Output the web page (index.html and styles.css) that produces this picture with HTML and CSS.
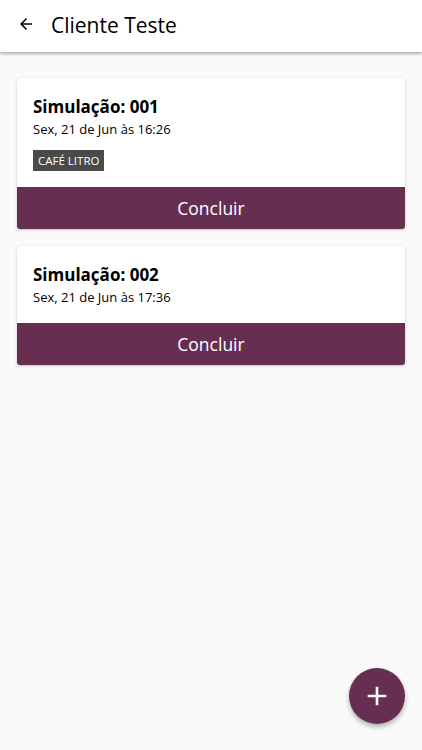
FILE: index.html
```html
<!DOCTYPE html>
<html lang="pt">
	<head>
		<meta charset="UTF-8">
		<title>Cliente Teste</title>
		<meta name="viewport" content="width=device-width, initial-scale=1.0">
		<link rel="stylesheet" href="styles.css">
	</head>
	<body>
		<header class="toolbar">
			<button class="back" aria-label="Voltar">
				<svg width="18" height="18" viewBox="0 0 24 24"><path d="M20 11H7.83l5.59-5.59L12 4l-8 8 8 8 1.41-1.41L7.83 13H20v-2z" fill="#000"/></svg>
			</button>
			<h1>Cliente Teste</h1>
		</header>
		<main class="list">
			<article class="card">
				<div class="card-body">
					<h2>Simulação: 001</h2>
					<p class="date">Sex, 21 de Jun às 16:26</p>
					<div class="tags"><span class="tag">CAFÉ LITRO</span></div>
				</div>
				<button class="done">Concluir</button>
			</article>
			<article class="card">
				<div class="card-body">
					<h2>Simulação: 002</h2>
					<p class="date">Sex, 21 de Jun às 17:36</p>
				</div>
				<button class="done">Concluir</button>
			</article>
		</main>
		<button class="fab" aria-label="Adicionar">
			<svg width="32" height="32" viewBox="0 0 24 24"><path d="M19 13h-6v6h-2v-6H5v-2h6V5h2v6h6v2z" fill="#fff"/></svg>
		</button>
	</body>
</html>
```

FILE: styles.css
```css
html, body {
	margin: 0;
	padding: 0;
	height: 100%;
	background: #fafafa;
	font-family: 'Open Sans', 'Lato', sans-serif;
	color: #000;
}
.toolbar {
	display: flex;
	align-items: center;
	height: 52px;
	background: #fff;
	box-shadow: 0 2px 3px rgba(0, 0, 0, .3);
	position: relative;
}
.back {
	display: flex;
	align-items: center;
	justify-content: center;
	width: 24px;
	height: 24px;
	margin: -4px 0 0 14px;
	padding: 0;
	border: 0;
	background: none;
}
.toolbar h1 {
	margin: -2px 0 0 13px;
	font-size: 21px;
	font-weight: 500;
}
.list {
	display: flex;
	flex-direction: column;
	gap: 17px;
	padding: 26px 17px 0;
}
.card {
	background: #fff;
	border-radius: 3px;
	overflow: hidden;
	box-shadow: 0 1px 3px rgba(0, 0, 0, .22);
}
.card-body {
	padding: 16px 16px 16px;
}
.card h2 {
	margin: 0;
	font-size: 17px;
	font-weight: 700;
	line-height: 25px;
}
.date {
	margin: 0;
	font-size: 13px;
	line-height: 20px;
}
.tags {
	display: flex;
	margin-top: 11px;
}
.tag {
	background: #4a4a4a;
	color: #fff;
	font-size: 11.5px;
	line-height: 21px;
	padding: 0 5px;
}
.done {
	display: block;
	width: 100%;
	height: 42px;
	border: 0;
	background: #662f52;
	color: #fff;
	font-family: inherit;
	font-size: 17.5px;
}
.fab {
	position: fixed;
	right: 17px;
	bottom: 26px;
	width: 56px;
	height: 56px;
	border: 0;
	border-radius: 50%;
	background: #662f52;
	display: flex;
	align-items: center;
	justify-content: center;
	box-shadow: 0 3px 5px rgba(0, 0, 0, .3);
}
```
